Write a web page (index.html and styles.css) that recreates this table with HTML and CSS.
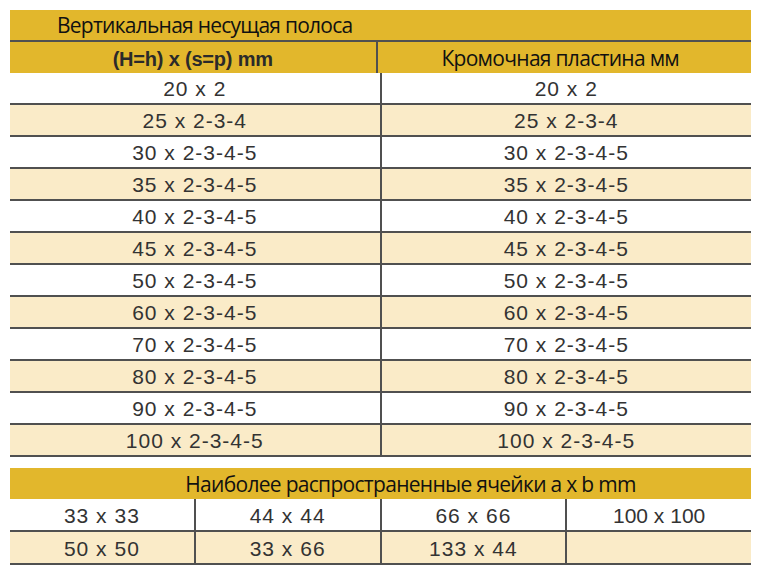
FILE: index.html
```html
<!DOCTYPE html>
<html lang="ru">
<head>
<meta charset="utf-8">
<link rel="stylesheet" href="styles.css">
</head>
<body>
<div class="page">
  <div class="tbl">
    <div class="row title-row">
      <div class="cell title-cell">Вертикальная несущая полоса</div>
    </div>
    <div class="row head-row">
      <div class="cell head-bold">(H=h) x (s=p) mm</div>
      <div class="cell head-cal">Кромочная пластина мм</div>
    </div>
    <div class="row body-row"><div class="cell">20 x 2</div><div class="cell">20 x 2</div></div>
    <div class="row body-row alt"><div class="cell">25 x 2-3-4</div><div class="cell">25 x 2-3-4</div></div>
    <div class="row body-row"><div class="cell">30 x 2-3-4-5</div><div class="cell">30 x 2-3-4-5</div></div>
    <div class="row body-row alt"><div class="cell">35 x 2-3-4-5</div><div class="cell">35 x 2-3-4-5</div></div>
    <div class="row body-row"><div class="cell">40 x 2-3-4-5</div><div class="cell">40 x 2-3-4-5</div></div>
    <div class="row body-row alt"><div class="cell">45 x 2-3-4-5</div><div class="cell">45 x 2-3-4-5</div></div>
    <div class="row body-row"><div class="cell">50 x 2-3-4-5</div><div class="cell">50 x 2-3-4-5</div></div>
    <div class="row body-row alt"><div class="cell">60 x 2-3-4-5</div><div class="cell">60 x 2-3-4-5</div></div>
    <div class="row body-row"><div class="cell">70 x 2-3-4-5</div><div class="cell">70 x 2-3-4-5</div></div>
    <div class="row body-row alt"><div class="cell">80 x 2-3-4-5</div><div class="cell">80 x 2-3-4-5</div></div>
    <div class="row body-row"><div class="cell">90 x 2-3-4-5</div><div class="cell">90 x 2-3-4-5</div></div>
    <div class="row body-row alt"><div class="cell">100 x 2-3-4-5</div><div class="cell">100 x 2-3-4-5</div></div>
  </div>

  <div class="tbl tbl2">
    <div class="row title-row2">
      <div class="cell title2-cell">Наиболее распространенные ячейки a x b mm</div>
    </div>
    <div class="row cell-row">
      <div class="cell">33 x 33</div>
      <div class="cell">44 x 44</div>
      <div class="cell">66 x 66</div>
      <div class="cell tight">100 x 100</div>
    </div>
    <div class="row cell-row alt">
      <div class="cell">50 x 50</div>
      <div class="cell">33 x 66</div>
      <div class="cell">133 x 44</div>
      <div class="cell"></div>
    </div>
  </div>
</div>
</body>
</html>
```

FILE: styles.css
```css
html, body {
  margin: 0;
  padding: 0;
  background: #ffffff;
}

.page {
  padding: 10px 0 0 10px;
  width: 741px;
}

.tbl {
  width: 741px;
}

.tbl2 {
  margin-top: 11px;
}

.row {
  display: flex;
  box-sizing: border-box;
}

.cell {
  flex: 1 1 0;
  min-width: 0;
  display: flex;
  align-items: center;
  justify-content: center;
  box-sizing: border-box;
  font-family: "Liberation Sans", Arial, sans-serif;
  font-size: 21px;
  letter-spacing: 1px;
  color: #333333;
  white-space: nowrap;
  padding-top: 2px;
}

.cell + .cell {
  border-left: 2px solid #505050;
}

.title-row {
  height: 32px;
  background: #e2b72c;
  border-bottom: 2px solid #505050;
}

.title-cell {
  font-family: "Open Sans", "Noto Sans", sans-serif;
  font-size: 21px;
  letter-spacing: -0.75px;
  color: #111111;
  justify-content: flex-start;
  padding-left: 47px;
  padding-top: 0;
}

.head-row {
  height: 31px;
  background: #e2b72c;
}

.head-bold {
  font-weight: bold;
  font-size: 20px;
  letter-spacing: -0.2px;
  color: #2a2a2a;
  padding-top: 4px;
}

.head-cal {
  font-family: "Open Sans", "Noto Sans", sans-serif;
  font-size: 21px;
  letter-spacing: -0.7px;
  color: #111111;
  padding-right: 8px;
  padding-top: 0;
}

.body-row {
  height: 32px;
  background: #ffffff;
  border-bottom: 2px solid #505050;
}

.alt {
  background: #faebc8;
}

.title-row2 {
  height: 31px;
  background: #e2b72c;
}

.title2-cell {
  font-family: "Open Sans", "Noto Sans", sans-serif;
  font-size: 21px;
  letter-spacing: -0.7px;
  color: #111111;
  padding-left: 60px;
  padding-top: 0;
}

.cell-row {
  height: 33px;
  border-bottom: 2px solid #505050;
}

.tight {
  letter-spacing: 0px;
}
```
